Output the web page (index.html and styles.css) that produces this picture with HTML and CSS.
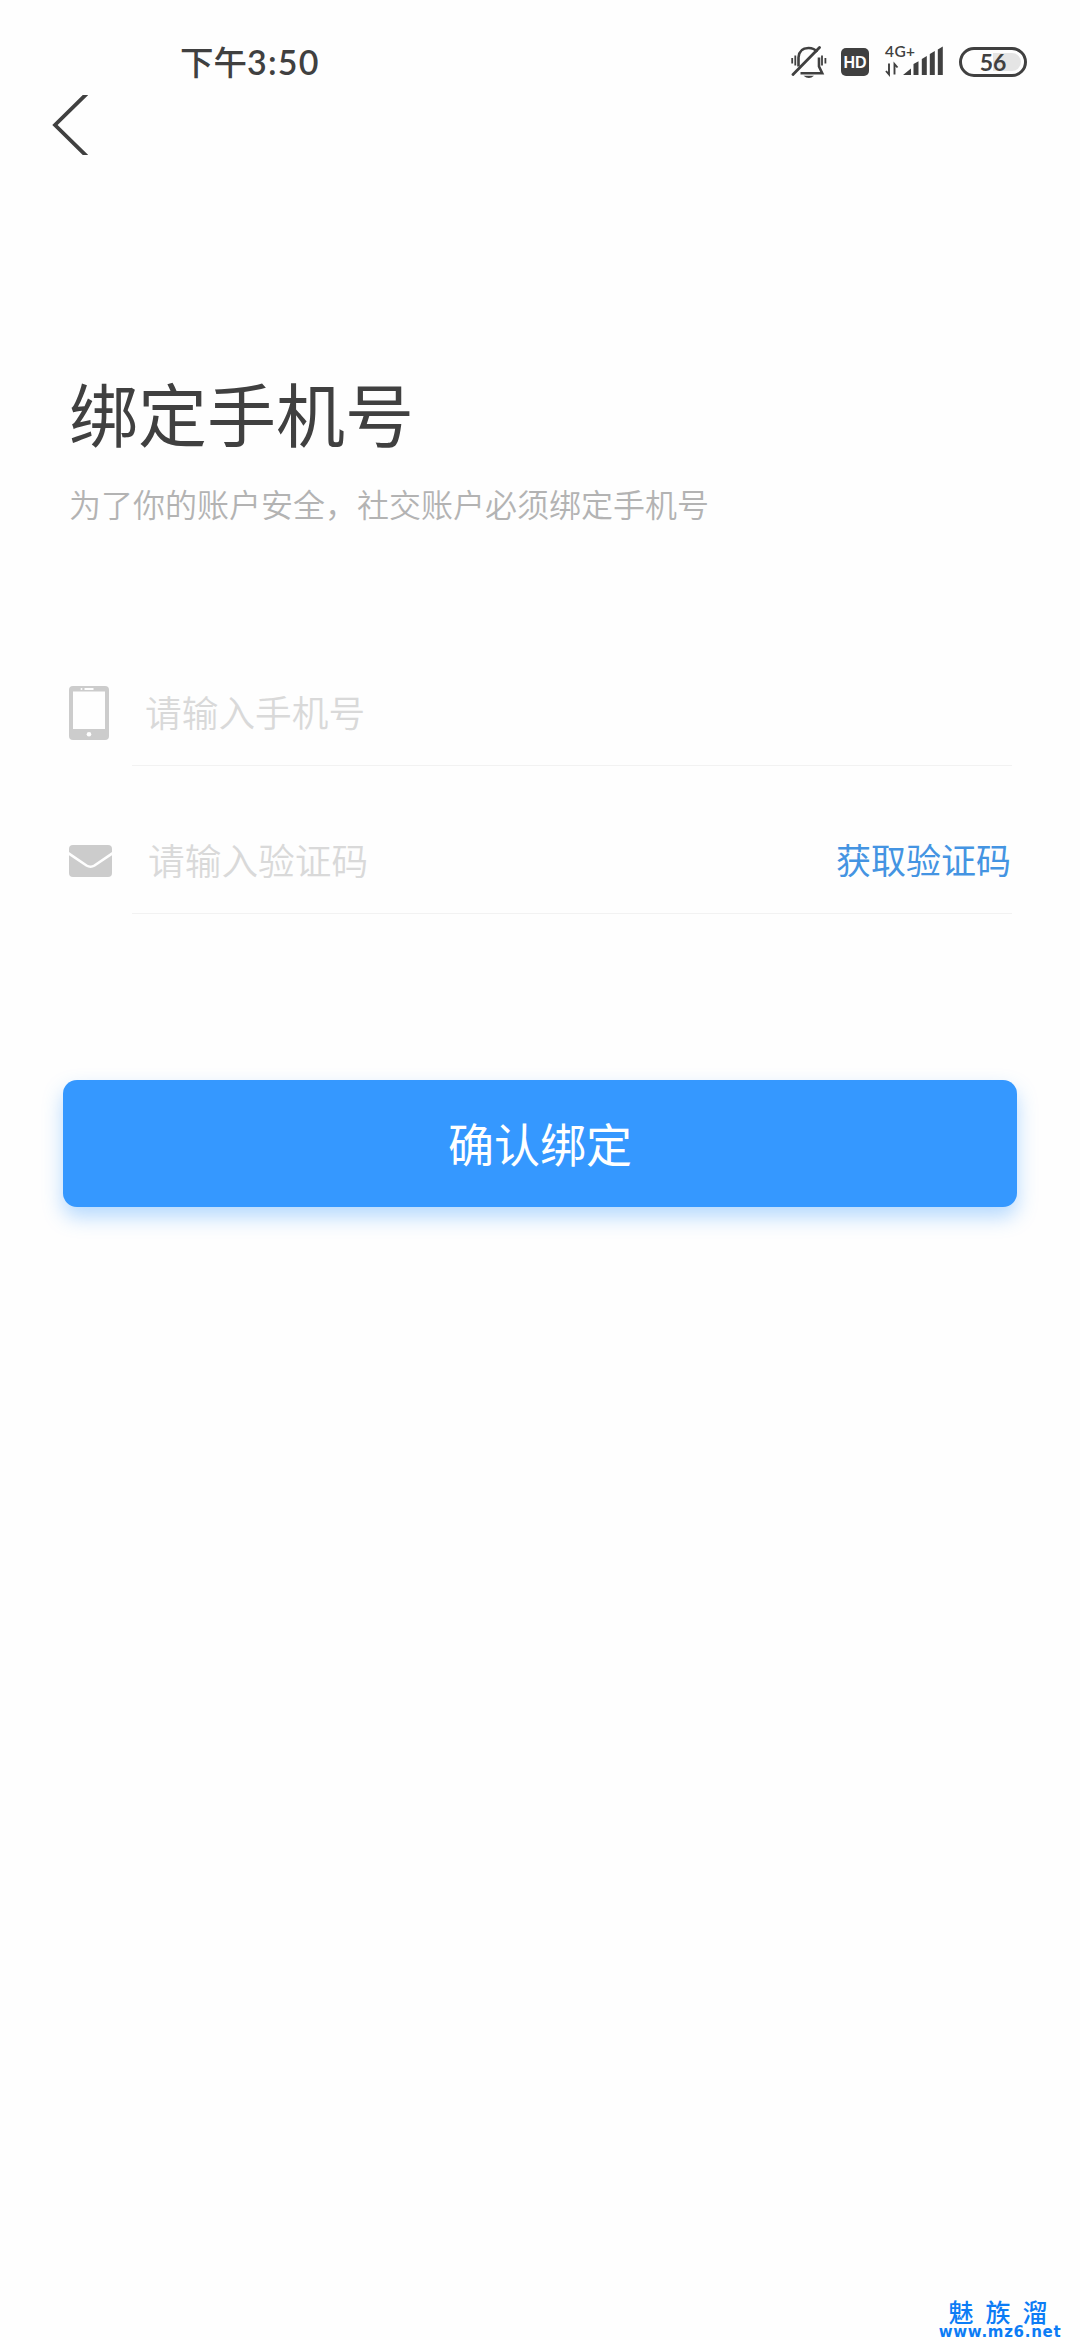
FILE: index.html
```html
<!DOCTYPE html>
<html lang="zh-CN">
<head>
<meta charset="utf-8">
<title>绑定手机号</title>
<link rel="stylesheet" href="styles.css">
</head>
<body>
<div class="screen">
  <header class="status">
    <div class="clock">下午<span class="digits">3:50</span></div>
    <div class="indicators">
      <svg class="bell" width="36" height="34" viewBox="0 0 36 34" fill="none" stroke="#404040" stroke-width="2.6">
        <path d="M7.500 20.500V11.500C8 5 12 2 17.500 2c3.800 0 6.800 1.400 8.500 4M28 11.500V20.500l3.200 6.700H9.500"/>
        <path d="M28.500 1.500L2 28.500" stroke-width="2.800" stroke-linecap="round"/>
        <path d="M1.200 12v5.500M4.300 9.500v10M31 9.500v10M34.400 12v5.500" stroke-width="1.800"/>
        <path d="M12.500 29.800h10.500q-5 4.500-10.500 0z" fill="#404040" stroke="none"/>
      </svg>
      <div class="hd">HD</div>
      <div class="network">
        <span class="generation">4G+</span>
        <svg width="58" height="32" viewBox="0 0 58 32" fill="#404040">
          <path d="M4 17.500V28.500L1 25M9.500 28.500V18L12.500 21.500" fill="none" stroke="#404040" stroke-width="1.900"/>
          <path d="M18 29l8-6.500V29zM28.500 29V18l5-2.700V29zM36.800 29V13l5-3v19zM44.800 29V8l5-3v24zM52.800 29V3.500l5-3V29z"/>
        </svg>
      </div>
      <div class="battery"><span class="charge">56</span></div>
    </div>
  </header>
  <nav class="nav">
    <svg width="36" height="60" viewBox="0 0 36 60" fill="none" stroke="#404040" stroke-width="3.800"><path d="M36 -2.500L3 30L36 62.500"/></svg>
  </nav>
  <main class="content">
    <h1 class="title">绑定手机号</h1>
    <p class="subtitle">为了你的账户安全，社交账户必须绑定手机号</p>
    <form class="form">
      <div class="row">
        <svg class="icon" width="40" height="54" viewBox="0 0 40 54">
          <rect width="40" height="54" rx="4" fill="#ccc"/>
          <rect x="4" y="5.500" width="32" height="37.500" fill="#fefefe"/>
          <rect x="15.500" y="2" width="9" height="2" fill="#fefefe"/><circle cx="12.500" cy="3" r="1" fill="#fefefe"/>
          <circle cx="20" cy="48.300" r="2.300" fill="#fefefe"/>
        </svg>
        <div class="field"><span class="placeholder">请输入手机号</span></div>
      </div>
      <div class="row">
        <svg class="icon" width="43" height="32" viewBox="0 0 43 32">
          <rect width="43" height="32" rx="4" fill="#ccc"/>
          <path d="M-1 8L17.500 20.500Q21.500 23 25.500 20.500L44 8" fill="none" stroke="#fefefe" stroke-width="2.600"/>
        </svg>
        <div class="field field-code"><span class="placeholder">请输入验证码</span><a class="send">获取验证码</a></div>
      </div>
      <button class="submit" type="button">确认绑定</button>
    </form>
  </main>
  <footer class="mark"><div class="mark-name">魅族溜</div><div class="mark-url">www.mz6.net</div></footer>
</div>
</body>
</html>
```
FILE: styles.css
```css
* { box-sizing: border-box; }
body {
  margin: 0;
  background: #fefefe;
  color: #404040;
  font-family: "Noto Sans CJK SC", sans-serif;
}
.screen {
  width: 1080px;
  height: 2340px;
  display: flex;
  flex-direction: column;
  overflow: hidden;
}
.status {
  height: 95px;
  padding: 29px 53px 0 180px;
  display: flex;
  justify-content: space-between;
  align-items: flex-start;
}
.clock {
  font-size: 33.500px;
  font-weight: 500;
  line-height: 64px;
  white-space: nowrap;
}
.digits {
  font-family: Lato, sans-serif;
  font-size: 34px;
  font-weight: 600;
  letter-spacing: 1.2px;
}
.indicators { display: flex; padding-top: 17px; }
.bell { margin-right: 14px; }
.hd {
  width: 28px;
  height: 28px;
  margin: 2px 16px 0 0;
  border-radius: 5px;
  background: #404040;
  color: #fefefe;
  font: 700 16px/29px "Liberation Sans", sans-serif;
  text-align: center;
}
.network { width: 58px; height: 32px; display: grid; margin-right: 16px; }
.network > * { grid-area: 1 / 1; }
.generation { font: 600 15.500px/11px Lato, sans-serif; letter-spacing: .4px; }
.battery {
  width: 68px;
  height: 30px;
  margin-top: 1px;
  padding: 3px;
  border: 3px solid #404040;
  border-radius: 15px;
}
.charge {
  display: block;
  height: 18px;
  border-radius: 9px;
  background: linear-gradient(90deg, #fefefe 50%, #e5e5e5 50%);
  font: 700 23px/18px Lato, sans-serif;
  text-align: center;
}
.nav { height: 60px; padding-left: 52px; }
.nav svg { display: block; }
.content { padding: 207px 63px 0; }
.title {
  margin: 0;
  padding-left: 6px;
  font-size: 69px;
  font-weight: 400;
  line-height: 100px;
}
.subtitle {
  margin: 16px 0 0;
  padding-left: 6px;
  color: #b3b3b3;
  font-size: 32px;
  line-height: 51px;
  font-weight: 350;
}
.form { padding-top: 89px; }
.row {
  height: 148px;
  padding: 0 6px;
  display: grid;
  grid-template-columns: 63px 880px;
  align-items: center;
}
.icon { display: block; margin-top: 42px; }
.field {
  height: 148px;
  padding: 38px 1px 0 13px;
  border-bottom: 1px solid #f2f2f2;
  display: flex;
  align-items: center;
  justify-content: space-between;
}
.field-code { padding-left: 16px; }
.placeholder { color: #d9d9d9; font-size: 36.700px; font-weight: 350; }
.send { color: #4494e2; font-size: 35px; font-weight: 400; }
.submit {
  display: block;
  width: 954px;
  height: 127px;
  margin-top: 166px;
  padding: 0 0 4px;
  border: 0;
  border-radius: 14px;
  background: #3598ff;
  box-shadow: 0 10px 20px rgba(53, 152, 255, .36);
  color: #fff;
  font: 400 46px "Noto Sans CJK SC", sans-serif;
}
.mark {
  width: 126px;
  margin: auto 17px 0 auto;
  color: #0c7cf5;
  text-align: center;
}
.mark-name { font-size: 25px; font-weight: 500; line-height: 25px; letter-spacing: 12px; padding-left: 8px; white-space: nowrap; }
.mark-url { font: 700 15px/16px "DejaVu Sans", sans-serif; letter-spacing: .7px; white-space: nowrap; }
```
